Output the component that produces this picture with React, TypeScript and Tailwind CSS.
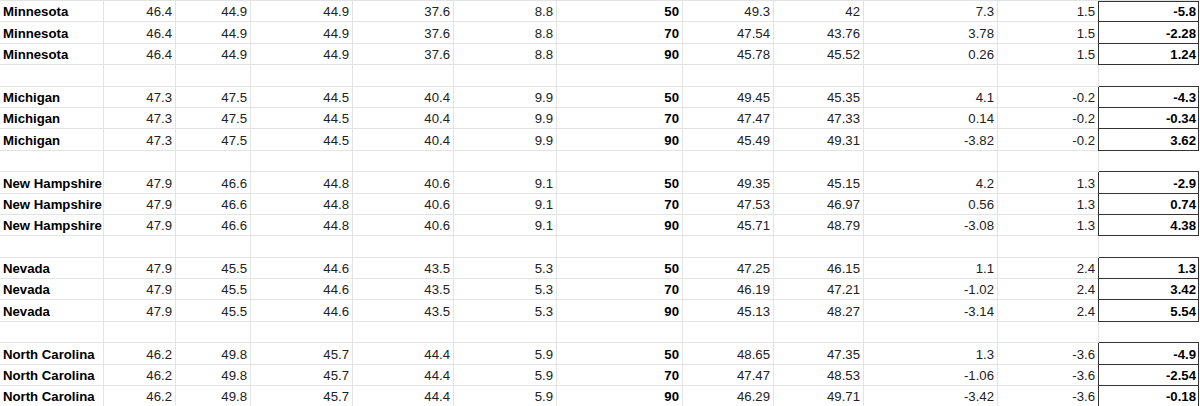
import clsx from "clsx";

type Group = {
	state: string;
	polls: [string, string, string, string, string];
	shift: string;
	rows: [string, string, string, string, string][];
};

const groups: Group[] = [
	{
		state: "Minnesota",
		polls: ["46.4", "44.9", "44.9", "37.6", "8.8"],
		shift: "1.5",
		rows: [
			["50", "49.3", "42", "7.3", "-5.8"],
			["70", "47.54", "43.76", "3.78", "-2.28"],
			["90", "45.78", "45.52", "0.26", "1.24"],
		],
	},
	{
		state: "Michigan",
		polls: ["47.3", "47.5", "44.5", "40.4", "9.9"],
		shift: "-0.2",
		rows: [
			["50", "49.45", "45.35", "4.1", "-4.3"],
			["70", "47.47", "47.33", "0.14", "-0.34"],
			["90", "45.49", "49.31", "-3.82", "3.62"],
		],
	},
	{
		state: "New Hampshire",
		polls: ["47.9", "46.6", "44.8", "40.6", "9.1"],
		shift: "1.3",
		rows: [
			["50", "49.35", "45.15", "4.2", "-2.9"],
			["70", "47.53", "46.97", "0.56", "0.74"],
			["90", "45.71", "48.79", "-3.08", "4.38"],
		],
	},
	{
		state: "Nevada",
		polls: ["47.9", "45.5", "44.6", "43.5", "5.3"],
		shift: "2.4",
		rows: [
			["50", "47.25", "46.15", "1.1", "1.3"],
			["70", "46.19", "47.21", "-1.02", "3.42"],
			["90", "45.13", "48.27", "-3.14", "5.54"],
		],
	},
	{
		state: "North Carolina",
		polls: ["46.2", "49.8", "45.7", "44.4", "5.9"],
		shift: "-3.6",
		rows: [
			["50", "48.65", "47.35", "1.3", "-4.9"],
			["70", "47.47", "48.53", "-1.06", "-2.54"],
			["90", "46.29", "49.71", "-3.42", "-0.18"],
		],
	},
];

// column widths, right gridline included
const widths = [
	"w-[104px]",
	"w-[72px]",
	"w-[75px]",
	"w-[102px]",
	"w-[101px]",
	"w-[103px]",
	"w-[126px]",
	"w-[91px]",
	"w-[90px]",
	"w-[134px]",
	"w-[101px]",
];

const cell = "shrink-0 h-full flex items-end pb-[2px] border-r border-b border-[#e2e3e3] leading-[14px]";

const Row = ({
	values,
	boxed,
	first,
}: {
	values: string[];
	boxed: boolean;
	first?: boolean;
}) => (
	<div className="flex h-[21.4px]">
		{widths.map((w, i) => (
			<div
				key={i}
				className={clsx(
					cell,
					w,
					i === 0 ? "justify-start pl-[3px] font-bold text-black" : "justify-end pr-[3px]",
					i === 6 && "font-bold text-black",
				)}
			>
				{values[i] ?? ""}
			</div>
		))}
		{boxed ? (
			<div
				className={clsx(
					"shrink-0 h-full w-[101px] -ml-px flex items-end justify-end pb-[2px] pr-[2px] leading-[14px] font-bold text-black border-x border-b border-[#333]",
					first && "shadow-[inset_0_1px_0_#333]",
				)}
			>
				{values[11]}
			</div>
		) : (
			<div className="shrink-0 h-full w-[100px] border-b border-[#333]" />
		)}
	</div>
);

export default function App() {
	return (
		<div className="w-[1200px] h-[406px] overflow-hidden bg-white font-['Liberation_Sans',Arial,sans-serif] text-[13.2px] text-[#222]">
			<div className="border-t border-[#e2e3e3]">
				{groups.map((g, gi) => (
					<div key={g.state}>
						{g.rows.map((r, ri) => (
							<Row
								key={ri}
								boxed
								first={gi === 0 && ri === 0}
								values={[g.state, ...g.polls, r[0], r[1], r[2], r[3], g.shift, r[4]]}
							/>
						))}
						{gi < groups.length - 1 && <Row values={[]} boxed={false} />}
					</div>
				))}
			</div>
		</div>
	);
}
